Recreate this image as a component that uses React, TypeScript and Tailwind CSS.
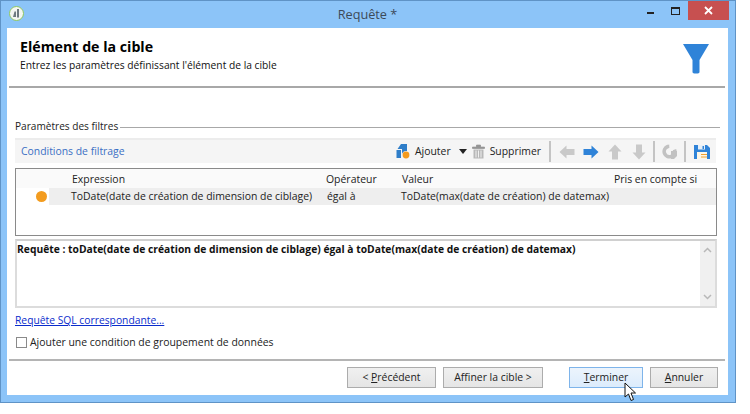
import React from 'react';

const font = { fontFamily: '"Open Sans", "Noto Sans", sans-serif' };

const Sep = () => <div className="w-[2px] h-[21px] bg-[#c4c4c4]" />;

const Arrow: React.FC<{ rotate?: number; color?: string }> = ({ rotate = 0, color = '#c9c9c9' }) => (
  <svg width="16" height="16" viewBox="0 0 16 16" style={{ transform: `rotate(${rotate}deg)` }}>
    <path d="M0.5 8 L7.5 1.5 V5 H15.5 V11 H7.5 V14.5 Z" fill={color} />
  </svg>
);

const DialogButton: React.FC<{ width: string; active?: boolean; children: React.ReactNode }> = ({ width, active, children }) => (
  <div
    className={`${width} h-[21px] flex items-center justify-center text-[10.4px] text-[#222] border ${
      active ? 'border-[#7eb4ea] bg-gradient-to-b from-[#ecf4fc] to-[#dcecfc]' : 'border-[#acacac] bg-gradient-to-b from-[#f0f0f0] to-[#e5e5e5]'
    }`}
  >
    {children}
  </div>
);

export default function App() {
  return (
    <div className="w-[750px] h-[414px] bg-white overflow-hidden" style={font}>
      <div className="w-[736px] h-[403px] flex flex-col bg-[#8cc4f8] border border-[#5f93c6] pl-[6px] pr-[7px] pb-[7px]">
        {/* title bar */}
        <div className="h-[27px] shrink-0 flex items-start relative">
          <svg className="absolute left-[2px] top-[5px]" width="15" height="15" viewBox="0 0 15 15">
            <circle cx="7.5" cy="7.5" r="7" fill="#f4f6f2" stroke="#8fc760" strokeWidth="1" />
            <path d="M4 11 L5.5 5.5 H7 V11 Z M8 3 H10 V11.5 H8 Z" fill="#6f7a80" />
          </svg>
          <div className="flex-1 text-center text-[12.7px] leading-[27px] text-[#3c4a58]">Requête *</div>
          <div className="absolute right-[74px] top-[11px] w-[7px] h-[2px] bg-[#222]" />
          <div className="absolute right-[48px] top-[6px] w-[9px] h-[8px] border border-[#222] border-t-2" />
          <div className="absolute right-[-1px] top-0 w-[41px] h-[19px] bg-[#c75050] flex items-center justify-center">
            <svg width="9" height="9" viewBox="0 0 9 9"><path d="M1 1 L8 8 M8 1 L1 8" stroke="#fff" strokeWidth="1.8" /></svg>
          </div>
        </div>

        {/* content */}
        <div className="flex-1 min-h-0 flex flex-col bg-white pl-[2px] pr-[3px]">
          <div className="h-[60px] shrink-0 flex justify-between border-b-2 border-[#a8a8a8] pl-[11px] pr-[16px]">
            <div className="pt-[9px]">
              <div className="text-[14.2px] leading-[19px] font-bold text-black">Elément de la cible</div>
              <div className="mt-[1px] text-[10.25px] leading-[17px] text-[#111]">Entrez les paramètres définissant l'élément de la cible</div>
            </div>
            <svg className="mt-[16px]" width="26" height="30" viewBox="0 0 26 30">
              <path d="M0 0 H26 L16.5 16 V28 Q16.5 29.5 13 29.5 Q9.5 29.5 9.5 28 V16 Z" fill="#2f83d8" />
            </svg>
          </div>

          <div className="flex flex-col pl-[6px] pr-[5px] pt-[31px] flex-1 min-h-0">
            <div className="flex items-center h-[16px]">
              <span className="text-[10.1px] text-[#222] pr-[2px]">Paramètres des filtres</span>
              <div className="flex-1 h-[1px] bg-[#a8a8a8]" />
            </div>

            <div className="mt-[3px] h-[25px] mr-[4px] flex items-center bg-[#f5f5f5] border-t-2 border-[#ececec] pl-[6px] pr-[6px]">
              <span className="text-[10.4px] text-[#3a6fc4]">Conditions de filtrage</span>
              <div className="ml-auto flex items-center">
                <svg width="14" height="15" viewBox="0 0 14 15">
                  <path d="M5 0 H11 V7 A4.5 4.5 0 0 0 6 10 V5 H1.5 Z" fill="#2f7ec9" />
                  <path d="M0.5 6 H5 V14 H0.5 Z" fill="#2f7ec9" />
                  <circle cx="10" cy="11" r="3.4" fill="#f39a1e" />
                </svg>
                <span className="text-[10.4px] text-[#222] ml-[5px]">Ajouter</span>
                <svg className="ml-[8px]" width="8" height="5" viewBox="0 0 8 5"><path d="M0 0 H8 L4 5 Z" fill="#222" /></svg>
                <svg className="ml-[5px]" width="13" height="15" viewBox="0 0 13 15">
                  <path d="M0.5 3 H12.5 V4.5 H0.5 Z M4.5 3 V1 H8.5 V3" fill="#9a9a9a" stroke="#8a8a8a" strokeWidth="0.6" />
                  <path d="M1.5 5.5 H11.5 V14.5 H1.5 Z" fill="#b8b8b8" />
                  <path d="M4 6.5 V13.5 M6.5 6.5 V13.5 M9 6.5 V13.5" stroke="#f0f0f0" strokeWidth="1" />
                </svg>
                <span className="text-[10.4px] text-[#222] ml-[5px] mr-[8px]">Supprimer</span>
                <Sep />
                <div className="flex items-center gap-[8px] ml-[8px] mr-[6px]">
                  <Arrow />
                  <Arrow rotate={180} color="#2f83d8" />
                  <Arrow rotate={90} />
                  <Arrow rotate={-90} />
                </div>
                <Sep />
                <svg className="mx-[7px]" width="15" height="15" viewBox="0 0 15 15">
                  <circle cx="7.5" cy="7.5" r="5.3" fill="none" stroke="#c2c2c2" strokeWidth="3.6" strokeDasharray="26 7" transform="rotate(-20 7.5 7.5)" />
                  <path d="M9 7 H15 V12 L12 15 H9 Z" fill="#c2c2c2" />
                </svg>
                <Sep />
                <svg className="ml-[8px]" width="16" height="16" viewBox="0 0 16 16">
                  <path d="M0 1 H13 L16 4 V15 H0 Z" fill="#2f83d8" />
                  <path d="M4 1 H11 V5.5 H4 Z" fill="#e8f0f8" />
                  <path d="M8.5 2 H10 V5 H8.5 Z" fill="#2f83d8" />
                  <path d="M3 8 H13 V15 H3 Z" fill="#fdf6e6" />
                  <path d="M7 10 H13 V11 H7 Z M7 12.5 H13 V13.5 H7 Z" fill="#f0a030" />
                </svg>
              </div>
            </div>

            {/* table */}
            <div className="mt-[5px] mr-[3px] h-[68px] shrink-0 border border-[#8a8a8a] bg-white text-[10.45px] text-[#222]">
              <div className="grid grid-cols-[55px_255px_75px_212px_1fr] h-[19px] leading-[20px] bg-[#fafafa]">
                <div />
                <div className="pl-[1px]">Expression</div>
                <div>Opérateur</div>
                <div className="pl-[1px]">Valeur</div>
                <div className="pl-[1px]">Pris en compte si</div>
              </div>
              <div className="grid grid-cols-[55px_255px_75px_212px_1fr] h-[17px] leading-[16px]">
                <div className="flex">
                  <div className="w-[33px] shrink-0 flex items-center pl-[20px]">
                    <div className="w-[11px] h-[11px] shrink-0 rounded-full bg-[#f39c1f]" />
                  </div>
                  <div className="flex-1 bg-[#eeeeee]" />
                </div>
                <div className="bg-[#eeeeee] whitespace-nowrap">ToDate(date de création de dimension de ciblage)</div>
                <div className="bg-[#eeeeee] pl-[1px]">égal à</div>
                <div className="bg-[#eeeeee] whitespace-nowrap">ToDate(max(date de création) de datemax)</div>
                <div className="bg-[#eeeeee]" />
              </div>
            </div>

            {/* query box */}
            <div className="mt-[3px] mr-[3px] h-[69px] shrink-0 flex border-2 border-[#dcdcdc] border-t-[#d0d0d0] bg-white">
              <div className="flex-1 text-[10.3px] leading-[16px] font-bold text-[#111] whitespace-nowrap overflow-hidden">
                Requête : toDate(date de création de dimension de ciblage) égal à toDate(max(date de création) de datemax)
              </div>
              <div className="w-[15px] bg-[#f0f0f0] flex flex-col items-center justify-between py-[6px]">
                <svg width="9" height="6" viewBox="0 0 9 6"><path d="M1 5 L4.5 1.5 L8 5" fill="none" stroke="#b8b8b8" strokeWidth="1.5" /></svg>
                <svg width="9" height="6" viewBox="0 0 9 6"><path d="M1 1 L4.5 4.5 L8 1" fill="none" stroke="#b8b8b8" strokeWidth="1.5" /></svg>
              </div>
            </div>

            <a className="mt-[5px] text-[10.3px] leading-[15px] text-[#0a2ccc] underline w-fit">Requête SQL correspondante...</a>

            <label className="mt-[6px] flex items-center gap-[3px] text-[10.45px] leading-[16px] text-[#222]">
              <span className="ml-[1px] w-[11px] h-[11px] border border-[#8a8a8a] bg-white" />
              Ajouter une condition de groupement de données
            </label>
          </div>

          {/* footer */}
          <div className="h-[36px] shrink-0 border-t-2 border-[#b4b4b4] flex items-start pt-[6px] relative">
            <div className="ml-[338px] flex gap-[7px]">
              <DialogButton width="w-[89px]">&lt;&nbsp;<span className="underline">P</span>récédent</DialogButton>
              <DialogButton width="w-[100px]">Affiner la cible &gt;</DialogButton>
            </div>
            <div className="ml-[26px] flex gap-[7px]">
              <DialogButton width="w-[74px]" active><span className="underline">T</span>erminer</DialogButton>
              <DialogButton width="w-[68px]"><span className="underline">A</span>nnuler</DialogButton>
            </div>
            <svg className="absolute left-[615px] top-[21px]" width="13" height="20" viewBox="0 0 13 20">
              <path d="M1 1 V15 L4.5 12 L7 18.5 L9.5 17.5 L7 11 H11.5 Z" fill="#fff" stroke="#111" strokeWidth="1" strokeLinejoin="round" />
            </svg>
          </div>
        </div>
      </div>
    </div>
  );
}
